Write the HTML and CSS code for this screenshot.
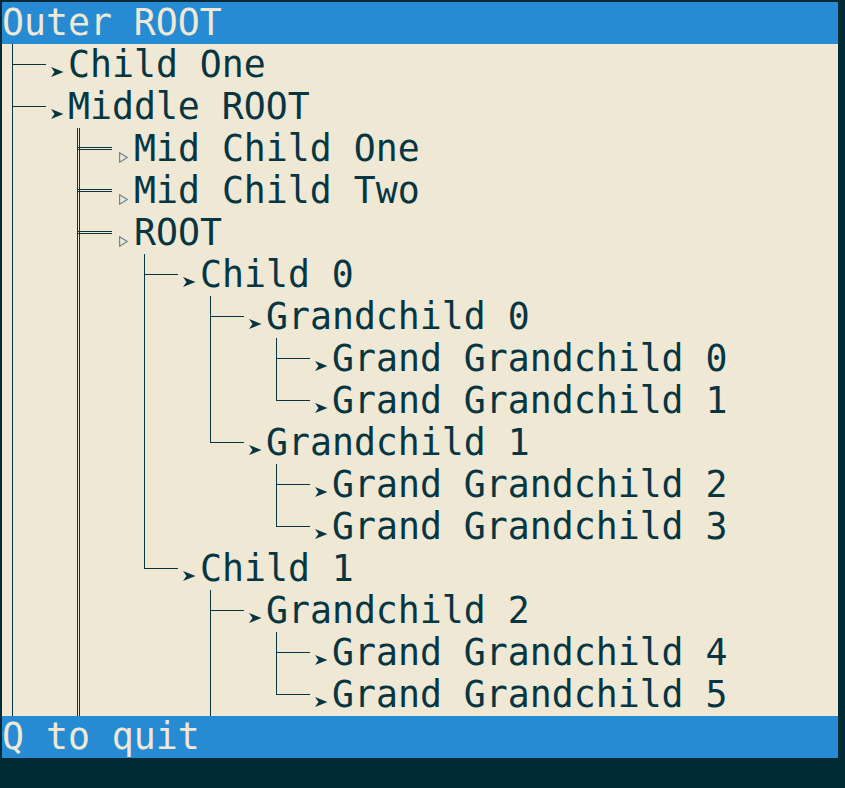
FILE: index.html
```html
<!DOCTYPE html>
<html>
<head>
<meta charset="utf-8">
<link rel="stylesheet" href="styles.css">
</head>
<body>
<div class="term">
  <div class="bar">Outer ROOT</div>
  <div class="tree">
    <div class="row"><span class="c t"></span><span class="c h"></span><span class="c"><svg class="fa" width="13" height="10" viewBox="0 0 13 10"><polygon points="0,0 12.5,5 0,10 3.5,5"/></svg></span><span class="txt">Child One</span></div>
    <div class="row"><span class="c t"></span><span class="c h"></span><span class="c"><svg class="fa" width="13" height="10" viewBox="0 0 13 10"><polygon points="0,0 12.5,5 0,10 3.5,5"/></svg></span><span class="txt">Middle ROOT</span></div>
    <div class="row"><span class="c v"></span><span class="c"></span><span class="c"></span><span class="c dt"></span><span class="c dh"></span><span class="c"><svg class="ha" width="9" height="11" viewBox="0 0 9 11"><polygon points="0.6,0.8 8.2,5.5 0.6,10.2"/></svg></span><span class="txt">Mid Child One</span></div>
    <div class="row"><span class="c v"></span><span class="c"></span><span class="c"></span><span class="c dt"></span><span class="c dh"></span><span class="c"><svg class="ha" width="9" height="11" viewBox="0 0 9 11"><polygon points="0.6,0.8 8.2,5.5 0.6,10.2"/></svg></span><span class="txt">Mid Child Two</span></div>
    <div class="row"><span class="c v"></span><span class="c"></span><span class="c"></span><span class="c dt"></span><span class="c dh"></span><span class="c"><svg class="ha" width="9" height="11" viewBox="0 0 9 11"><polygon points="0.6,0.8 8.2,5.5 0.6,10.2"/></svg></span><span class="txt">ROOT</span></div>
    <div class="row"><span class="c v"></span><span class="c"></span><span class="c"></span><span class="c dv"></span><span class="c"></span><span class="c"></span><span class="c t"></span><span class="c h"></span><span class="c"><svg class="fa" width="13" height="10" viewBox="0 0 13 10"><polygon points="0,0 12.5,5 0,10 3.5,5"/></svg></span><span class="txt">Child 0</span></div>
    <div class="row"><span class="c v"></span><span class="c"></span><span class="c"></span><span class="c dv"></span><span class="c"></span><span class="c"></span><span class="c v"></span><span class="c"></span><span class="c"></span><span class="c t"></span><span class="c h"></span><span class="c"><svg class="fa" width="13" height="10" viewBox="0 0 13 10"><polygon points="0,0 12.5,5 0,10 3.5,5"/></svg></span><span class="txt">Grandchild 0</span></div>
    <div class="row"><span class="c v"></span><span class="c"></span><span class="c"></span><span class="c dv"></span><span class="c"></span><span class="c"></span><span class="c v"></span><span class="c"></span><span class="c"></span><span class="c v"></span><span class="c"></span><span class="c"></span><span class="c t"></span><span class="c h"></span><span class="c"><svg class="fa" width="13" height="10" viewBox="0 0 13 10"><polygon points="0,0 12.5,5 0,10 3.5,5"/></svg></span><span class="txt">Grand Grandchild 0</span></div>
    <div class="row"><span class="c v"></span><span class="c"></span><span class="c"></span><span class="c dv"></span><span class="c"></span><span class="c"></span><span class="c v"></span><span class="c"></span><span class="c"></span><span class="c v"></span><span class="c"></span><span class="c"></span><span class="c l"></span><span class="c h"></span><span class="c"><svg class="fa" width="13" height="10" viewBox="0 0 13 10"><polygon points="0,0 12.5,5 0,10 3.5,5"/></svg></span><span class="txt">Grand Grandchild 1</span></div>
    <div class="row"><span class="c v"></span><span class="c"></span><span class="c"></span><span class="c dv"></span><span class="c"></span><span class="c"></span><span class="c v"></span><span class="c"></span><span class="c"></span><span class="c l"></span><span class="c h"></span><span class="c"><svg class="fa" width="13" height="10" viewBox="0 0 13 10"><polygon points="0,0 12.5,5 0,10 3.5,5"/></svg></span><span class="txt">Grandchild 1</span></div>
    <div class="row"><span class="c v"></span><span class="c"></span><span class="c"></span><span class="c dv"></span><span class="c"></span><span class="c"></span><span class="c v"></span><span class="c"></span><span class="c"></span><span class="c"></span><span class="c"></span><span class="c"></span><span class="c t"></span><span class="c h"></span><span class="c"><svg class="fa" width="13" height="10" viewBox="0 0 13 10"><polygon points="0,0 12.5,5 0,10 3.5,5"/></svg></span><span class="txt">Grand Grandchild 2</span></div>
    <div class="row"><span class="c v"></span><span class="c"></span><span class="c"></span><span class="c dv"></span><span class="c"></span><span class="c"></span><span class="c v"></span><span class="c"></span><span class="c"></span><span class="c"></span><span class="c"></span><span class="c"></span><span class="c l"></span><span class="c h"></span><span class="c"><svg class="fa" width="13" height="10" viewBox="0 0 13 10"><polygon points="0,0 12.5,5 0,10 3.5,5"/></svg></span><span class="txt">Grand Grandchild 3</span></div>
    <div class="row"><span class="c v"></span><span class="c"></span><span class="c"></span><span class="c dv"></span><span class="c"></span><span class="c"></span><span class="c l"></span><span class="c h"></span><span class="c"><svg class="fa" width="13" height="10" viewBox="0 0 13 10"><polygon points="0,0 12.5,5 0,10 3.5,5"/></svg></span><span class="txt">Child 1</span></div>
    <div class="row"><span class="c v"></span><span class="c"></span><span class="c"></span><span class="c dv"></span><span class="c"></span><span class="c"></span><span class="c"></span><span class="c"></span><span class="c"></span><span class="c t"></span><span class="c h"></span><span class="c"><svg class="fa" width="13" height="10" viewBox="0 0 13 10"><polygon points="0,0 12.5,5 0,10 3.5,5"/></svg></span><span class="txt">Grandchild 2</span></div>
    <div class="row"><span class="c v"></span><span class="c"></span><span class="c"></span><span class="c dv"></span><span class="c"></span><span class="c"></span><span class="c"></span><span class="c"></span><span class="c"></span><span class="c v"></span><span class="c"></span><span class="c"></span><span class="c t"></span><span class="c h"></span><span class="c"><svg class="fa" width="13" height="10" viewBox="0 0 13 10"><polygon points="0,0 12.5,5 0,10 3.5,5"/></svg></span><span class="txt">Grand Grandchild 4</span></div>
    <div class="row"><span class="c v"></span><span class="c"></span><span class="c"></span><span class="c dv"></span><span class="c"></span><span class="c"></span><span class="c"></span><span class="c"></span><span class="c"></span><span class="c v"></span><span class="c"></span><span class="c"></span><span class="c l"></span><span class="c h"></span><span class="c"><svg class="fa" width="13" height="10" viewBox="0 0 13 10"><polygon points="0,0 12.5,5 0,10 3.5,5"/></svg></span><span class="txt">Grand Grandchild 5</span></div>
  </div>
  <div class="bar">Q to quit</div>
</div>
</body>
</html>
```

FILE: styles.css
```css
html, body {
  margin: 0;
  padding: 0;
  background: #002b36;
}
body {
  width: 845px;
  height: 788px;
  overflow: hidden;
}
.term {
  margin: 2px 0 0 2px;
  width: 836px;
  background: #eee8d5;
  font-family: "DejaVu Sans Mono", monospace;
  font-size: 36.5px;
  line-height: 42px;
  color: #073642;
}
.bar {
  height: 42px;
  background: #268bd2;
  color: #eee8d5;
  white-space: pre;
}
.tree {
  height: 672px;
  overflow: hidden;
}
.row {
  display: flex;
  height: 42px;
}
.txt {
  white-space: pre;
}
.c {
  flex: 0 0 22px;
  width: 22px;
  height: 42px;
  background-repeat: no-repeat;
}
.v {
  background-image: linear-gradient(#073642, #073642);
  background-position: 10px 0;
  background-size: 1px 100%;
}
.h {
  background-image: linear-gradient(#073642, #073642);
  background-position: 0 20px;
  background-size: 100% 1px;
}
.t {
  background-image: linear-gradient(#073642, #073642), linear-gradient(#073642, #073642);
  background-position: 10px 0, 10px 20px;
  background-size: 1px 100%, 12px 1px;
}
.l {
  background-image: linear-gradient(#073642, #073642), linear-gradient(#073642, #073642);
  background-position: 10px 0, 10px 20px;
  background-size: 1px 21px, 12px 1px;
}
.dv {
  background-image: linear-gradient(#073642, #073642), linear-gradient(#073642, #073642);
  background-position: 9px 0, 11px 0;
  background-size: 1px 100%, 1px 100%;
}
.dt {
  background-image: linear-gradient(#073642, #073642), linear-gradient(#073642, #073642), linear-gradient(#073642, #073642), linear-gradient(#073642, #073642);
  background-position: 9px 0, 11px 0, 9px 19px, 9px 21px;
  background-size: 1px 100%, 1px 100%, 13px 1px, 13px 1px;
}
.dh {
  background-image: linear-gradient(#073642, #073642), linear-gradient(#073642, #073642);
  background-position: 0 19px, 0 21px;
  background-size: 100% 1px, 100% 1px;
}
.fa {
  display: block;
  margin: 23px 0 0 5px;
  fill: #073642;
}
.ha {
  display: block;
  margin: 24px 0 0 7px;
  fill: none;
  stroke: #6c8792;
  stroke-width: 1.2;
}
```
